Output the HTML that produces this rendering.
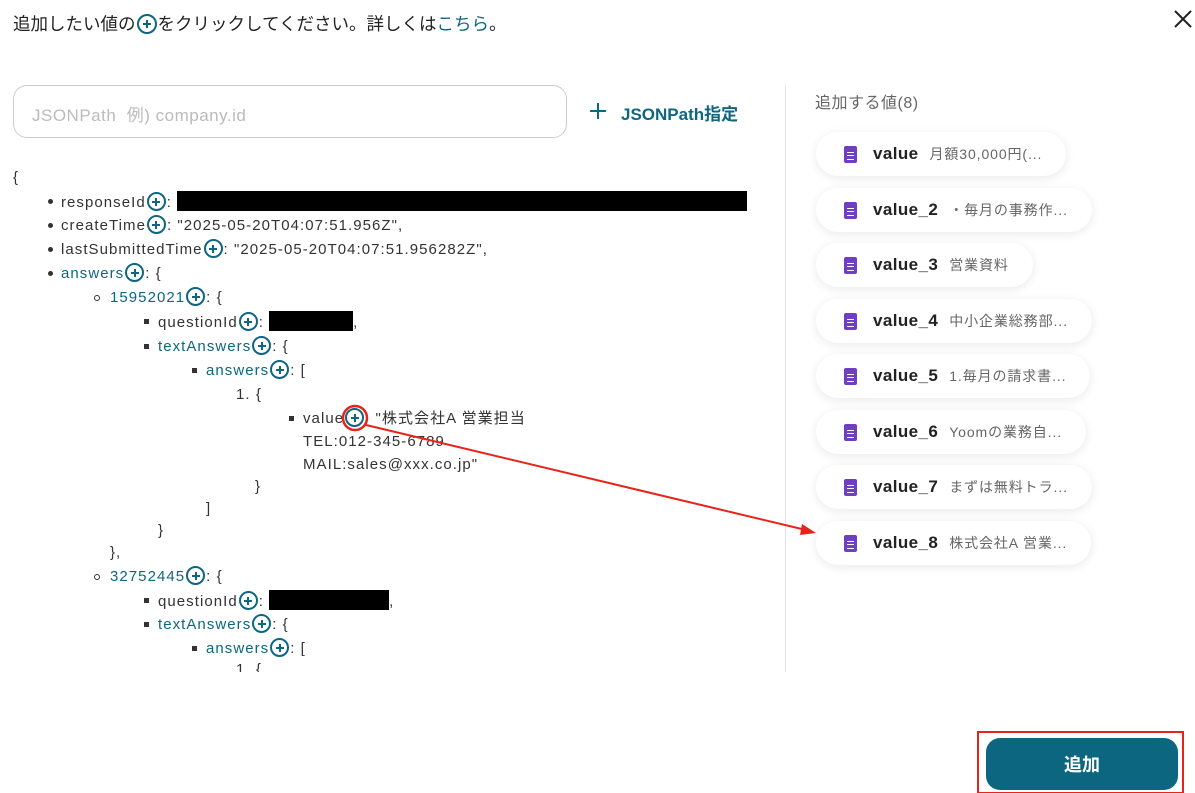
<!DOCTYPE html>
<html><head><meta charset="utf-8"><style>
*{margin:0;padding:0;box-sizing:border-box}
body{width:1195px;height:793px;background:#fff;font-family:"Liberation Sans","Noto Sans CJK JP",sans-serif;color:#333;position:relative;overflow:hidden}
.a{position:absolute;white-space:nowrap}
.t{color:#0e6680}
.p{display:inline-block;width:19px;height:19px;border:2px solid #0e6680;border-radius:50%;vertical-align:-4px;position:relative;margin:0 1px;letter-spacing:0}
.p:before,.p:after{content:"";position:absolute;background:#0e6680;left:50%;top:50%}
.p:before{width:8px;height:2px;margin:-1px 0 0 -4px}
.p:after{width:2px;height:8px;margin:-4px 0 0 -1px}
.j{font-size:15px;line-height:20px;letter-spacing:1.05px}
.b{position:absolute;width:5px;height:5px;background:#333;border-radius:50%}
.s{position:absolute;width:5px;height:5px;background:#333}
.o{position:absolute;width:6px;height:6px;border:1px solid #333;border-radius:50%}
.blk{display:inline-block;background:#000;height:20px;vertical-align:-4px}
.chip{position:absolute;left:816px;height:44px;border-radius:22px;background:#fff;box-shadow:0 2px 10px rgba(0,0,0,.09);font-size:17px;display:flex;align-items:center;padding-left:28px;padding-right:24px}
.chip i{display:inline-block;width:13px;height:17px;background:#6e3fc4;border-radius:2px;margin-right:16px;position:relative}
.chip i:before{content:"";position:absolute;left:3px;top:6px;width:7px;height:6px;border-top:1px solid #fff;border-bottom:1px solid #fff}
.chip i:after{content:"";position:absolute;left:3px;top:9px;width:7px;height:1px;background:#fff}
.chip b{font-weight:bold;color:#222;margin-right:11px;letter-spacing:0.4px}
.chip span{color:#666;font-size:14px;letter-spacing:0.9px}
</style></head><body>
<div class="a" style="left:13px;top:11px;font-size:17.5px;color:#222">追加したい値の<span class="p" style="width:20px;height:20px"></span>をクリックしてください。詳しくは<span class="t">こちら</span>。</div>
<svg class="a" style="left:1173px;top:9px" width="20" height="20"><path d="M2 2L18 18M18 2L2 18" stroke="#222" stroke-width="2"/></svg>
<div class="a" style="left:13px;top:85px;width:554px;height:53px;border:1px solid #ccc;border-radius:14px"></div>
<div class="a" style="left:32px;top:101px;font-size:17px;color:#bbb;letter-spacing:0.5px">JSONPath&nbsp; 例) company.id</div>
<svg class="a" style="left:589px;top:102px" width="18" height="18"><path d="M9 1V17M1 9H17" stroke="#0e6680" stroke-width="2"/></svg>
<div class="a t" style="left:621px;top:100px;font-size:17px;font-weight:bold">JSONPath指定</div>
<div class="a" style="left:785px;top:85px;width:1px;height:587px;background:#e3e3e3"></div>
<div class="a" style="left:815px;top:89px;font-size:16px;color:#666;letter-spacing:0.5px">追加する値(8)</div>

<div class="a j" style="left:13px;top:168px">{</div>
<div class="b" style="left:48px;top:199px"></div><div class="a j" style="left:61px;top:191px">responseId<span class="p"></span>: <span class="blk" style="width:570px"></span></div>
<div class="b" style="left:48px;top:223px"></div><div class="a j" style="left:61px;top:215px">createTime<span class="p"></span>: "2025-05-20T04:07:51.956Z",</div>
<div class="b" style="left:48px;top:247px"></div><div class="a j" style="left:61px;top:239px">lastSubmittedTime<span class="p"></span>: "2025-05-20T04:07:51.956282Z",</div>
<div class="b" style="left:48px;top:271px"></div><div class="a j" style="left:61px;top:263px"><span class="t">answers</span><span class="p"></span>: {</div>
<div class="o" style="left:94px;top:295px"></div><div class="a j" style="left:110px;top:287px"><span class="t">15952021</span><span class="p"></span>: {</div>
<div class="s" style="left:144px;top:319px"></div><div class="a j" style="left:158px;top:311px">questionId<span class="p"></span>: <span class="blk" style="width:84px"></span>,</div>
<div class="s" style="left:144px;top:344px"></div><div class="a j" style="left:158px;top:336px"><span class="t">textAnswers</span><span class="p"></span>: {</div>
<div class="s" style="left:192px;top:368px"></div><div class="a j" style="left:206px;top:360px"><span class="t">answers</span><span class="p"></span>: [</div>
<div class="a j" style="left:236px;top:385px">1. {</div>
<div class="s" style="left:289px;top:416px"></div><div class="a j" style="left:303px;top:408px">value<span class="p"></span> &nbsp;"株式会社A 営業担当</div>
<div class="a j" style="left:303px;top:432px">TEL:012-345-6789</div>
<div class="a j" style="left:303px;top:455px">MAIL:sales@xxx.co.jp"</div>
<div class="a j" style="left:255px;top:477px">}</div>
<div class="a j" style="left:206px;top:499px">]</div>
<div class="a j" style="left:158px;top:521px">}</div>
<div class="a j" style="left:110px;top:543px">},</div>
<div class="o" style="left:94px;top:574px"></div><div class="a j" style="left:110px;top:566px"><span class="t">32752445</span><span class="p"></span>: {</div>
<div class="s" style="left:144px;top:598px"></div><div class="a j" style="left:158px;top:590px">questionId<span class="p"></span>: <span class="blk" style="width:120px"></span>,</div>
<div class="s" style="left:144px;top:622px"></div><div class="a j" style="left:158px;top:614px"><span class="t">textAnswers</span><span class="p"></span>: {</div>
<div class="s" style="left:192px;top:646px"></div><div class="a j" style="left:206px;top:638px"><span class="t">answers</span><span class="p"></span>: [</div>
<div class="a j" style="left:236px;top:660px">1. {</div>
<div class="a" style="left:0;top:672px;width:785px;height:40px;background:#fff"></div>

<div class="chip" style="top:132px"><i></i><b>value</b><span>月額30,000円(...</span></div>
<div class="chip" style="top:188px"><i></i><b>value_2</b><span>・毎月の事務作...</span></div>
<div class="chip" style="top:243px"><i></i><b>value_3</b><span>営業資料</span></div>
<div class="chip" style="top:299px"><i></i><b>value_4</b><span>中小企業総務部...</span></div>
<div class="chip" style="top:354px"><i></i><b>value_5</b><span>1.毎月の請求書...</span></div>
<div class="chip" style="top:410px"><i></i><b>value_6</b><span>Yoomの業務自...</span></div>
<div class="chip" style="top:465px"><i></i><b>value_7</b><span>まずは無料トラ...</span></div>
<div class="chip" style="top:521px"><i></i><b>value_8</b><span>株式会社A 営業...</span></div>

<svg class="a" style="left:0;top:0" width="1195" height="793">
<circle cx="355" cy="418" r="12" fill="none" stroke="#e8231a" stroke-width="2.5"/>
<line x1="366" y1="425" x2="806" y2="530" stroke="#e8231a" stroke-width="2"/>
<path d="M816 533L802 524L800 535Z" fill="#e8231a"/>
<rect x="978" y="732" width="205" height="61" fill="none" stroke="#e8231a" stroke-width="2"/>
</svg>
<div class="a" style="left:986px;top:738px;width:192px;height:52px;background:#0d6680;border-radius:14px;color:#fff;font-size:18px;font-weight:bold;display:flex;align-items:center;justify-content:center">追加</div>
</body></html>
